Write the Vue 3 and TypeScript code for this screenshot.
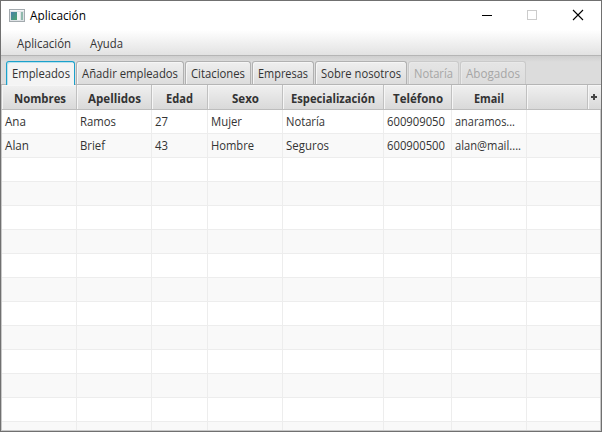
<script setup lang="ts">
interface Tab { label: string; width: number; text: number; disabled?: boolean }
interface Column { label: string; width: number; text: number }
interface Cell { text: string; width: number }

const tabs: Tab[] = [
  { label: 'Empleados', width: 69, text: 58 },
  { label: 'Añadir empleados', width: 108, text: 96 },
  { label: 'Citaciones', width: 66, text: 54 },
  { label: 'Empresas', width: 62, text: 50 },
  { label: 'Sobre nosotros', width: 92, text: 80 },
  { label: 'Notaría', width: 51, text: 39, disabled: true },
  { label: 'Abogados', width: 66, text: 54, disabled: true },
]
const columns: Column[] = [
  { label: 'Nombres', width: 75, text: 52 },
  { label: 'Apellidos', width: 75, text: 53 },
  { label: 'Edad', width: 56, text: 27 },
  { label: 'Sexo', width: 75, text: 27 },
  { label: 'Especialización', width: 101, text: 84 },
  { label: 'Teléfono', width: 68, text: 50 },
  { label: 'Email', width: 75, text: 30 },
]
const c = (text: string, width: number): Cell => ({ text, width })
const rows: Cell[][] = [
  [c('Ana', 21), c('Ramos', 36), c('27', 13), c('Mujer', 31), c('Notaría', 39), c('600909050', 58), c('anaramos...', 60)],
  [c('Alan', 24), c('Brief', 25), c('43', 13), c('Hombre', 43), c('Seguros', 43), c('600900500', 58), c('alan@mail....', 66)],
]
for (let i = 0; i < 12; i++) rows.push(columns.map(() => c('', 0)))
</script>

<template>
  <div class="window">
    <header class="titlebar">
      <svg class="app-icon" width="16" height="14" viewBox="0 0 16 14">
        <rect x=".5" y=".5" width="15" height="12" fill="#dfe3e6" stroke="#a3aaae" />
        <rect x="1" y="1" width="14" height="1" fill="#f5f7f8" />
        <defs><linearGradient id="pane" x1="0" y1="0" x2="1" y2="1"><stop stop-color="#477fa9" /><stop offset="1" stop-color="#4da66d" /></linearGradient></defs>
        <rect x="2" y="3" width="6" height="8" fill="url(#pane)" />
        <rect x="8" y="3" width="3" height="8" fill="#f4f6f6" />
        <rect x="12" y="3" width="2" height="8" fill="#8fb9ac" />
      </svg>
      <svg class="title" width="58" height="18"><text x="0" y="13" textLength="56" lengthAdjust="spacingAndGlyphs">Aplicación</text></svg>
      <svg class="controls" width="137" height="29" viewBox="0 0 137 29" shape-rendering="crispEdges">
        <rect x="18" y="14" width="10" height="1" fill="#000" />
        <rect x="63.5" y="9.5" width="9" height="9" fill="none" stroke="#ccc" />
        <path d="M109 9L119 19M119 9L109 19" fill="none" stroke="#000" stroke-width="1.1" shape-rendering="geometricPrecision" />
      </svg>
    </header>

    <nav class="menubar">
      <svg width="56" height="18"><text x="0" y="13" textLength="54" lengthAdjust="spacingAndGlyphs">Aplicación</text></svg>
      <svg width="36" height="18"><text x="0" y="13" textLength="33" lengthAdjust="spacingAndGlyphs">Ayuda</text></svg>
    </nav>

    <div class="tabs">
      <div v-for="(t, i) in tabs" :key="t.label" class="tab" :class="{ selected: i === 0, disabled: t.disabled }" :style="{ width: t.width + 'px' }">
        <svg :width="t.text" height="18"><text x="0" y="13" :textLength="t.text" lengthAdjust="spacingAndGlyphs">{{ t.label }}</text></svg>
      </div>
    </div>

    <div class="head">
      <div v-for="col in columns" :key="col.label" class="th" :style="{ width: col.width + 'px' }">
        <svg :width="col.text" height="18"><text x="0" y="13" :textLength="col.text" lengthAdjust="spacingAndGlyphs">{{ col.label }}</text></svg>
      </div>
      <div class="th filler"></div>
      <div class="plus">
        <svg width="6" height="6" viewBox="0 0 6 6"><path d="M3 0V6M0 3H6" stroke="#454545" stroke-width="2" /></svg>
      </div>
    </div>

    <div class="body">
      <div v-for="(row, r) in rows" :key="r" class="row">
        <div v-for="(cell, i) in row" :key="i" class="td" :style="{ width: columns[i].width + 'px' }">
          <svg v-if="cell.text" :width="cell.width" height="18"><text x="0" y="13" :textLength="cell.width" lengthAdjust="spacingAndGlyphs">{{ cell.text }}</text></svg>
        </div>
      </div>
    </div>
  </div>
</template>

<style>
body { margin: 0; overflow: hidden; }
</style>

<style scoped>
.window {
  box-sizing: border-box;
  width: 602px;
  height: 432px;
  border: 1px solid #707070;
  display: flex;
  flex-direction: column;
  background: #fff;
  font-family: "Open Sans", "Noto Sans", sans-serif;
  font-size: 12px;
  overflow: hidden;
}
svg { display: block; flex: none; overflow: visible; }
text { fill: #333; }
.titlebar { height: 29px; flex: none; display: flex; align-items: flex-start; }
.app-icon { margin: 8px 0 0 8px; }
.title { margin: 6px 0 0 5px; }
.title text { fill: #000; }
.controls { margin-left: auto; }
.menubar {
  height: 25px;
  flex: none;
  display: flex;
  gap: 17px;
  box-sizing: content-box;
  padding-left: 16px;
  border-bottom: 1px solid #b5b5b5;
  background: linear-gradient(#fff, #e2e2e2);
}
.menubar svg { margin-top: 5px; }
.tabs {
  height: 29px;
  flex: none;
  box-sizing: border-box;
  display: flex;
  align-items: flex-end;
  gap: 1px;
  padding-left: 5px;
  border-bottom: 1px solid #b5b5b5;
  background: linear-gradient(#cfcfcf, #dcdcdc 6px);
}
.tab {
  box-sizing: border-box;
  height: 23px;
  flex: none;
  display: flex;
  justify-content: center;
  padding-top: 3px;
  border: 1px solid #b1b1b1;
  border-bottom: 0;
  border-radius: 3px 3px 0 0;
  background: linear-gradient(#efefef, #dcdcdc);
  box-shadow: inset 1px 1px 0 #f6f6f6;
}
.tab.selected {
  height: 24px;
  margin-bottom: -1px;
  padding-top: 3px;
  border-color: #1ba1cb;
  background: #f4f4f4;
  box-shadow: inset 1px 1px 0 #b9e1ed;
}
.tab.disabled { border-color: #cacaca; background: linear-gradient(#e5e5e5, #dcdcdc); box-shadow: inset 1px 1px 0 #e9e9e9; }
.tab.disabled text { fill: #a6a6a6; }
.head {
  height: 25px;
  flex: none;
  box-sizing: border-box;
  display: flex;
  border-left: 1px solid #c3c3c3;
  border-bottom: 1px solid #bdbdbd;
  background: linear-gradient(#f0f0f0, #d9d9d9);
}
.th {
  box-sizing: border-box;
  flex: none;
  display: flex;
  justify-content: center;
  padding: 5px 0 0;
  border-right: 1px solid #c0c0c0;
  box-shadow: inset 1px 1px 0 #f6f6f6;
}
.th:first-child { padding-left: 2px; }
.th text { font-weight: 700; }
.filler { width: 61px; }
.plus { flex: 1; padding: 9px 0 0 3px; box-shadow: inset 1px 1px 0 #f6f6f6; }
.body {
  flex: 1;
  min-height: 0;
  overflow: hidden;
  border: 1px solid #c8c8c8;
  border-top: 0;
}
.row {
  height: 24px;
  box-sizing: border-box;
  display: flex;
  border-bottom: 1px solid #ededed;
}
.row:nth-child(even) { background: #f9f9f9; }
.td { box-sizing: border-box; flex: none; padding: 3px 0 0 3px; border-right: 1px solid #ededed; }
</style>
